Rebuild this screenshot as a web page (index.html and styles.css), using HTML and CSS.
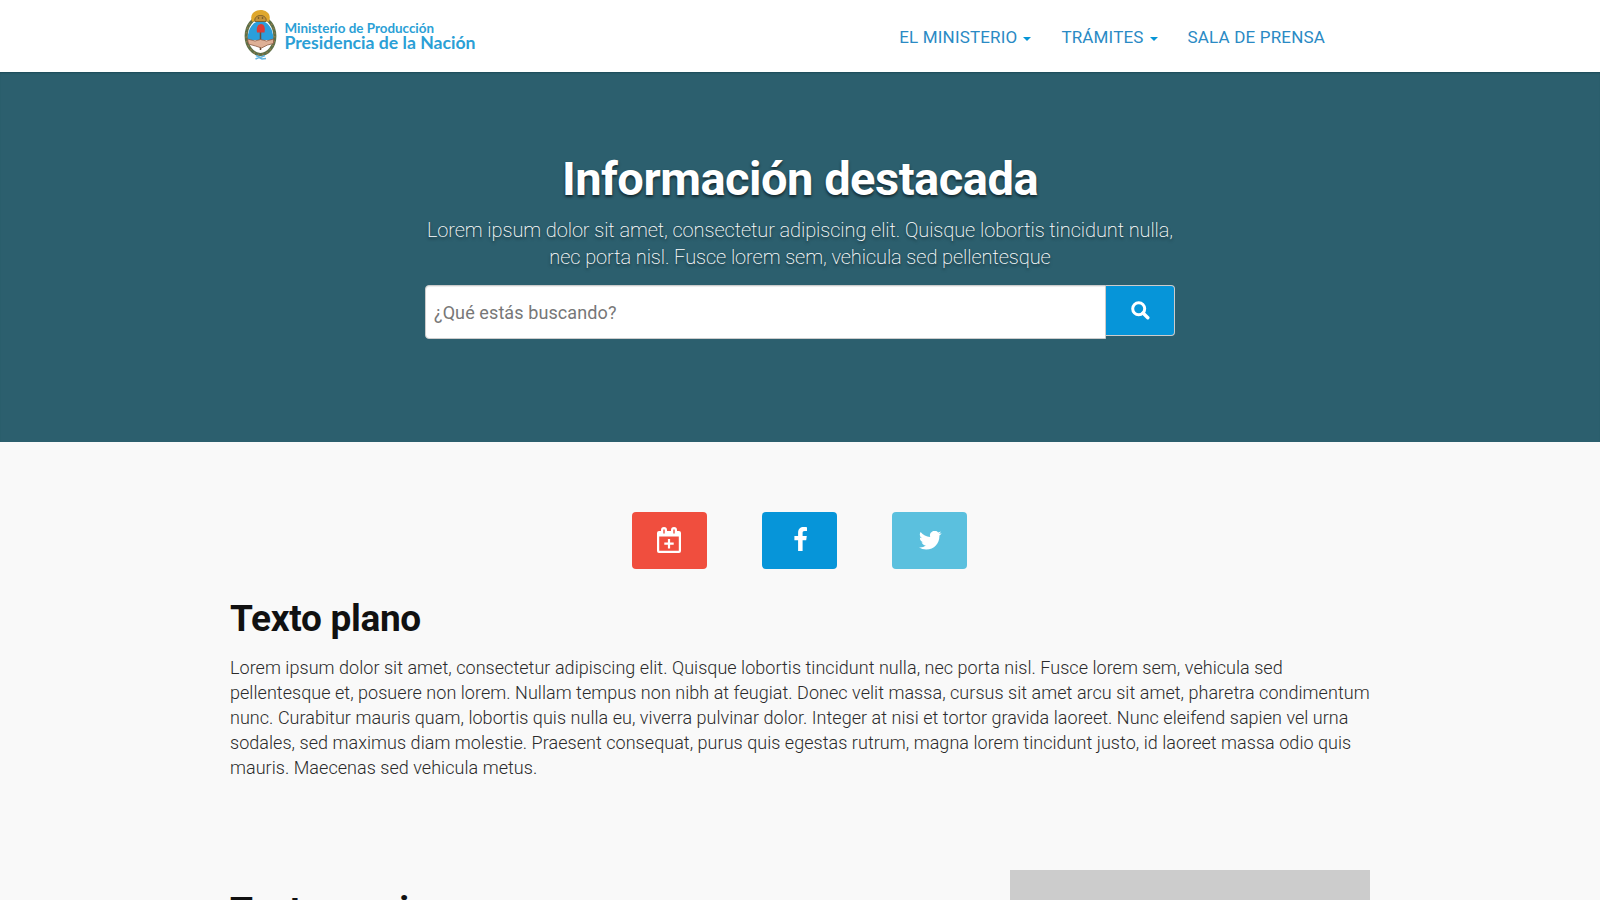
FILE: index.html
```html
<!DOCTYPE html>
<html lang="es">
<head>
<meta charset="utf-8">
<title>Ministerio de Producción</title>
<link rel="stylesheet" href="styles.css">
</head>
<body>
<header class="topbar">
  <a class="brand">
    <svg width="250" height="56" viewBox="0 0 250 56">
      <ellipse cx="17.500" cy="28" rx="14.300" ry="18.500" fill="#fff" stroke="#5d7048" stroke-width="3.200"/>
      <ellipse cx="17.500" cy="28" rx="14.300" ry="18.500" fill="none" stroke="#8f7a4c" stroke-width="1.600" stroke-dasharray="1.500 3"/>
      <path d="M4.800 30a12.700 17 0 0 1 25.400 0v2H4.800z" fill="#2b9fdc"/>
      <path d="M9 13.500C6 6 12 2 17.500 2S29 6 26 13.500z" fill="#dfa72c"/>
      <path d="M12 13.500c-2-8 13-8 11 0z" fill="#c4923a" stroke="#6b5428" stroke-width=".8"/>
      <circle cx="15.500" cy="10" r=".8" fill="#5b4a20"/><circle cx="19.500" cy="10" r=".8" fill="#5b4a20"/>
      <path d="M17.500 22v20" stroke="#6b4b35" stroke-width="1.500"/>
      <path d="M14 24.500c-1-5 1-8.500 4-8.500s4.500 3 3.500 8.500z" fill="#dc3b35"/>
      <path d="M4.500 31l7.500 2 5.500-1.500 6 1.500 7-2v4.500l-6 1.500-6 3-6-2-7-2z" fill="#dfb096" stroke="#8a5a43" stroke-width=".8"/>
      <path d="M13 47.500l4.500 2 4.500-2M12.500 51l3.500-1.500 3 1.500 4-.500" fill="none" stroke="#62b5df" stroke-width="1.500"/>
      <text class="logo-small" x="41.500" y="25" textLength="149.500" lengthAdjust="spacingAndGlyphs">Ministerio de Producción</text>
      <text class="logo-large" x="41.500" y="40.500" textLength="191" lengthAdjust="spacingAndGlyphs">Presidencia de la Nación</text>
    </svg>
  </a>
  <nav class="menu">
    <a>EL MINISTERIO<i class="caret"></i></a>
    <a>TRÁMITES<i class="caret"></i></a>
    <a>SALA DE PRENSA</a>
  </nav>
</header>
<section class="hero">
  <h1>Información destacada</h1>
  <p>Lorem ipsum dolor sit amet, consectetur adipiscing elit. Quisque lobortis tincidunt nulla,<br>nec porta nisl. Fusce lorem sem, vehicula sed pellentesque</p>
  <form class="search">
    <input type="text" placeholder="¿Qué estás buscando?">
    <button type="button" aria-label="Buscar"><svg width="19" height="19" viewBox="0 0 19 19"><circle cx="7.700" cy="7.700" r="6" fill="none" stroke="#fff" stroke-width="3"/><path d="M12 12l4.800 4.800" stroke="#fff" stroke-width="3.400" stroke-linecap="round"/></svg></button>
  </form>
</section>
<main class="content">
  <div class="social">
    <a class="tile red"><svg width="24" height="26" viewBox="0 0 24 26"><path fill="#fff" fill-rule="evenodd" d="M2 4h2V3a3 3 0 0 1 6 0v1h4V3a3 3 0 0 1 6 0v1h2a2 2 0 0 1 2 2v18a2 2 0 0 1-2 2H2a2 2 0 0 1-2-2V6a2 2 0 0 1 2-2zM2.200 9.500V23.800H21.800V9.500zM6.300 2.500v4h1.400v-4zM16.300 2.500v4h1.400v-4z"/><path d="M12 12v9.400M7.300 16.700h9.400" stroke="#fff" stroke-width="2.200"/></svg></a>
    <a class="tile blue"><svg width="13" height="24" viewBox="0 0 13 24"><path fill="#fff" d="M13 .2v3.900h-2.300c-1.800 0-2.100.9-2.100 2.100v2.700h4.200l-.6 4.300H8.600V24H4.100V13.200H.4V8.900h3.700V5.700C4.100 2 6.300 0 9.700 0 11.300 0 12.600.1 13 .2z"/></svg></a>
    <a class="tile sky"><svg width="23" height="19" viewBox="0 0 23 19"><path fill="#fff" d="M22.700 2.200a9.500 9.500 0 0 1-2.300 2.400C20.700 11.500 15.600 18.500 7.200 18.500A13.200 13.200 0 0 1 0 16.400a9.400 9.400 0 0 0 6.900-2 4.700 4.700 0 0 1-4.300-3.200h2A4.600 4.600 0 0 1 .9 6.600l2.100.6A4.700 4.700 0 0 1 1.600 1a13.200 13.200 0 0 0 9.600 4.900A4.600 4.600 0 0 1 19.100 1.500l3-1.100-2.100 2.500z"/></svg></a>
  </div>
  <article class="plain">
    <h2>Texto plano</h2>
    <p>Lorem ipsum dolor sit amet, consectetur adipiscing elit. Quisque lobortis tincidunt nulla, nec porta nisl. Fusce lorem sem, vehicula sed<br>pellentesque et, posuere non lorem. Nullam tempus non nibh at feugiat. Donec velit massa, cursus sit amet arcu sit amet, pharetra condimentum<br>nunc. Curabitur mauris quam, lobortis quis nulla eu, viverra pulvinar dolor. Integer at nisi et tortor gravida laoreet. Nunc eleifend sapien vel urna<br>sodales, sed maximus diam molestie. Praesent consequat, purus quis egestas rutrum, magna lorem tincidunt justo, id laoreet massa odio quis<br>mauris. Maecenas sed vehicula metus.</p>
  </article>
  <article class="media">
    <h2>Texto con imagen</h2>
    <div class="picture"></div>
  </article>
</main>
</body>
</html>
```
FILE: styles.css
```css
* { box-sizing: border-box; }
body { margin: 0; height: 900px; overflow: hidden; background: #f9f9f9; color: #111; font-family: Roboto, sans-serif; }
h1, h2, p { margin: 0; }
.topbar { height: 72px; background: #fff; padding: 8px 275px 0 243px; display: flex; justify-content: space-between; align-items: flex-start; }
.brand svg { display: block; }
.logo-small, .logo-large { font-family: Lato, sans-serif; font-weight: 700; fill: #2b9fd6; }
.logo-small { font-size: 13px; }
.logo-large { font-size: 16.5px; }
.menu { display: flex; gap: 30px; padding-top: 17px; font-size: 17px; line-height: 24px; letter-spacing: .17px; color: #2a8ac4; }
.menu a { display: flex; align-items: center; white-space: nowrap; }
.caret { margin: 4px 0 0 6px; border: 4px solid transparent; border-top-color: #0695d6; border-bottom: 0; }
.hero { height: 370px; background: #2c5f6e; box-shadow: inset 0 2px 2px -1px #1c4a58; color: #fff; text-align: center; padding-top: 80px; display: flex; flex-direction: column; align-items: center; }
.hero h1 { font-size: 47px; line-height: 54px; font-weight: 700; letter-spacing: -.48px; text-shadow: 0 2px 3px rgba(0,0,0,.6); }
.hero p { margin-top: 11px; font-size: 20px; line-height: 27px; font-weight: 200; letter-spacing: -.085px; white-space: nowrap; text-shadow: 0 2px 3px rgba(0,0,0,.5); }
.search { display: flex; align-items: flex-start; width: 750px; margin-top: 14px; }
.search input { flex: 1; height: 54px; border: 1px solid #ccc; border-radius: 4px 0 0 4px; padding: 0 8px; background: #fff; font: 18px Roboto, sans-serif; letter-spacing: .1px; box-shadow: inset 0 1px 1px rgba(0,0,0,.075); }
.search input::placeholder { color: #777; }
.search button { width: 69px; height: 51px; border: 1px solid #ccc; border-left: 0; border-radius: 0 4px 4px 0; background: #0695d9; padding: 0; display: flex; align-items: center; justify-content: center; }
.content { padding: 70px 230px 0; }
.social { display: flex; justify-content: center; gap: 55px; margin-right: 1px; }
.tile { width: 75px; height: 57px; border-radius: 4px; display: flex; align-items: center; justify-content: center; }
.red { background: #f04e3e; padding: 0 1px 2px 0; }
.blue { background: #0695d9; padding: 0 0 3px 1px; }
.sky { background: #5bc0de; padding-left: 2px; }
h2 { font-size: 37px; line-height: 42px; font-weight: 700; letter-spacing: -.3px; }
.plain { padding-top: 29px; }
.plain p { margin-top: 15px; font-size: 18px; line-height: 25px; font-weight: 300; letter-spacing: .04px; color: #2b2b2b; white-space: nowrap; }
.media { display: flex; justify-content: space-between; margin-top: 90px; }
.media h2 { padding-top: 20px; }
.picture { width: 360px; height: 240px; background: #ccc; }
```
